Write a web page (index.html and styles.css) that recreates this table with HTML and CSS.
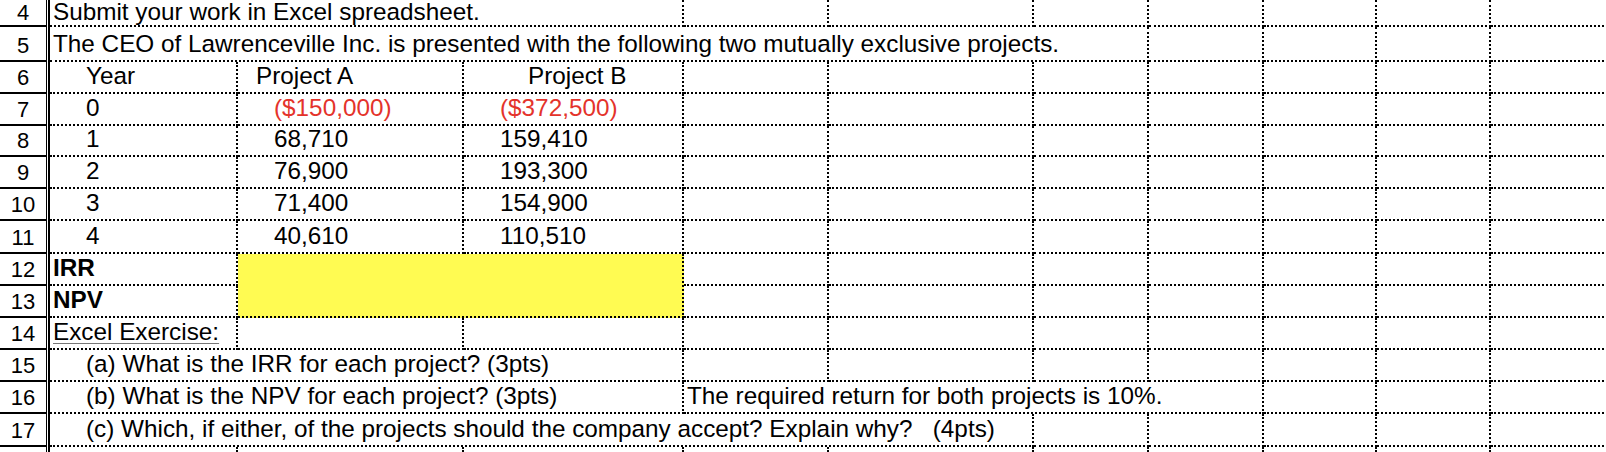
FILE: index.html
```html
<!DOCTYPE html>
<html lang="en">
<head>
<meta charset="utf-8">
<title>Lawrenceville Inc. projects</title>
<link rel="stylesheet" href="styles.css">
</head>
<body>
<div class="sheet">
  <div class="divider"></div>

  <!-- row 4 -->
  <div class="rh first">4</div>
  <div class="c s3 tl first">Submit your work in Excel spreadsheet.</div>
  <div class="c"></div><div class="c"></div><div class="c"></div><div class="c"></div><div class="c"></div><div class="c"></div><div class="c"></div>

  <!-- row 5 -->
  <div class="rh">5</div>
  <div class="c s6 tl">The CEO of Lawrenceville Inc. is presented with the following two mutually exclusive projects.</div>
  <div class="c"></div><div class="c"></div><div class="c"></div><div class="c"></div>

  <!-- row 6 -->
  <div class="rh">6</div>
  <div class="c ia">Year</div>
  <div class="c hb">Project A</div>
  <div class="c hc">Project B</div>
  <div class="c"></div><div class="c"></div><div class="c"></div><div class="c"></div><div class="c"></div><div class="c"></div><div class="c"></div>

  <!-- row 7 -->
  <div class="rh">7</div>
  <div class="c ia">0</div>
  <div class="c iv neg">($150,000)</div>
  <div class="c iv neg">($372,500)</div>
  <div class="c"></div><div class="c"></div><div class="c"></div><div class="c"></div><div class="c"></div><div class="c"></div><div class="c"></div>

  <!-- row 8 -->
  <div class="rh">8</div>
  <div class="c ia">1</div>
  <div class="c iv">68,710</div>
  <div class="c iv">159,410</div>
  <div class="c"></div><div class="c"></div><div class="c"></div><div class="c"></div><div class="c"></div><div class="c"></div><div class="c"></div>

  <!-- row 9 -->
  <div class="rh">9</div>
  <div class="c ia">2</div>
  <div class="c iv">76,900</div>
  <div class="c iv">193,300</div>
  <div class="c"></div><div class="c"></div><div class="c"></div><div class="c"></div><div class="c"></div><div class="c"></div><div class="c"></div>

  <!-- row 10 -->
  <div class="rh">10</div>
  <div class="c ia">3</div>
  <div class="c iv">71,400</div>
  <div class="c iv">154,900</div>
  <div class="c"></div><div class="c"></div><div class="c"></div><div class="c"></div><div class="c"></div><div class="c"></div><div class="c"></div>

  <!-- row 11 -->
  <div class="rh">11</div>
  <div class="c ia">4</div>
  <div class="c iv">40,610</div>
  <div class="c iv">110,510</div>
  <div class="c"></div><div class="c"></div><div class="c"></div><div class="c"></div><div class="c"></div><div class="c"></div><div class="c"></div>

  <!-- row 12 -->
  <div class="rh">12</div>
  <div class="c tl bold">IRR</div>
  <div class="c s2 r2 fill"></div>
  <div class="c"></div><div class="c"></div><div class="c"></div><div class="c"></div><div class="c"></div><div class="c"></div><div class="c"></div>

  <!-- row 13 -->
  <div class="rh">13</div>
  <div class="c tl bold">NPV</div>
  <div class="c"></div><div class="c"></div><div class="c"></div><div class="c"></div><div class="c"></div><div class="c"></div><div class="c"></div>

  <!-- row 14 -->
  <div class="rh">14</div>
  <div class="c tl"><span class="ul">Excel Exercise:</span></div>
  <div class="c"></div><div class="c"></div><div class="c"></div><div class="c"></div><div class="c"></div><div class="c"></div><div class="c"></div><div class="c"></div><div class="c"></div>

  <!-- row 15 -->
  <div class="rh">15</div>
  <div class="c s3 ia">(a) What is the IRR for each project? (3pts)</div>
  <div class="c"></div><div class="c"></div><div class="c"></div><div class="c"></div><div class="c"></div><div class="c"></div><div class="c"></div>

  <!-- row 16 -->
  <div class="rh">16</div>
  <div class="c s3 ia">(b) What is the NPV for each project? (3pts)</div>
  <div class="c s4 tl">The required return for both projects is 10%.</div>
  <div class="c"></div><div class="c"></div><div class="c"></div>

  <!-- row 17 -->
  <div class="rh">17</div>
  <div class="c s5 ia">(c) Which, if either, of the projects should the company accept? Explain why?&nbsp;&nbsp; (4pts)</div>
  <div class="c"></div><div class="c"></div><div class="c"></div><div class="c"></div><div class="c"></div>

  <!-- row 18 -->
  <div class="rh"></div>
  <div class="c"></div><div class="c"></div><div class="c"></div><div class="c"></div><div class="c"></div><div class="c"></div><div class="c"></div><div class="c"></div><div class="c"></div><div class="c"></div>
</div>
</body>
</html>
```

FILE: styles.css
```css
html, body {
  margin: 0;
  padding: 0;
  background: #ffffff;
  overflow: hidden;
}

.sheet {
  display: grid;
  grid-template-columns: 47px 3px 188px 226px 220px 145px 205px 115px 115px 113px 114px 200px;
  grid-template-rows: 27px 35px 32px 32px 31px 32px 32px 33px 32px 32px 32px 32px 32px 33px 20px;
  width: 1756px;
  font-family: "Liberation Sans", Arial, Helvetica, sans-serif;
  font-size: 24.3px;
  color: #000000;
}

.divider {
  grid-column: 2;
  grid-row: 1 / -1;
  border-right: 2px solid #000000;
}

.rh {
  grid-column: 1;
  box-sizing: border-box;
  border-right: 1px solid #000000;
  border-bottom: 2px solid #000000;
  display: flex;
  align-items: flex-end;
  justify-content: center;
  font-size: 22px;
  line-height: 22px;
  padding-bottom: 3px;
  color: #000000;
}

.c {
  box-sizing: border-box;
  border-right: 2px dotted #000000;
  border-bottom: 2px dotted #000000;
  display: flex;
  align-items: flex-end;
  line-height: 24px;
  padding-bottom: 4px;
  white-space: nowrap;
  min-width: 0;
}

.rh.first { padding-bottom: 1px; }
.c.first { padding-bottom: 1px; }

.s2 { grid-column: span 2; }
.s3 { grid-column: span 3; }
.s4 { grid-column: span 4; }
.s5 { grid-column: span 5; }
.s6 { grid-column: span 6; }
.r2 { grid-row: span 2; }

.tl { padding-left: 3px; }
.ia { padding-left: 36px; }
.iv { padding-left: 36px; }
.hb { padding-left: 18px; }
.hc { padding-left: 64px; }

.neg { color: #e4332b; }
.bold { font-weight: bold; }
.ul {
  text-decoration: underline;
  text-decoration-color: #777777;
  text-decoration-thickness: 1px;
  text-underline-offset: 3px;
}

.fill {
  background: #fffb52;
}
```
